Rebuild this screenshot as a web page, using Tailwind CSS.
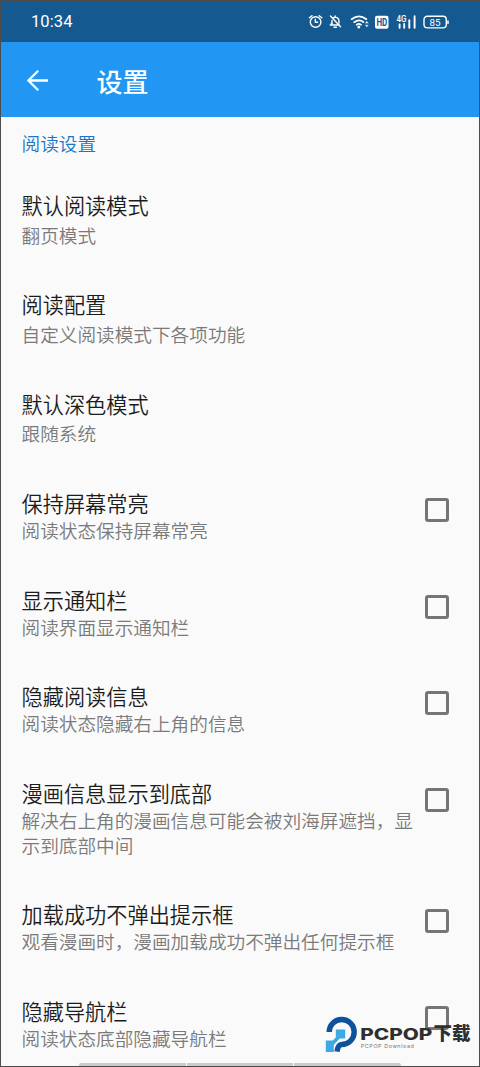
<!DOCTYPE html>
<html lang="zh-CN">
<head>
<meta charset="utf-8">
<title>设置</title>
<script src="https://cdn.jsdelivr.net/npm/@tailwindcss/browser@4"></script>
</head>
<body class="w-[480px] h-[1067px] overflow-hidden bg-[#fafafa] font-['Noto_Sans_CJK_SC',sans-serif]">
<div class="relative w-[480px] h-[1067px] overflow-hidden flex flex-col">
  <header class="shrink-0">
    <div class="h-[42px] bg-[#155991] flex items-center justify-between pl-[31px] pr-[31px] text-white">
      <span class="mt-[2px] font-[Roboto,sans-serif] text-[16.5px] leading-none tracking-[0.1px]">10:34</span>
      <svg width="142" height="20" viewBox="0 0 142 20" fill="none" stroke="#fff" stroke-width="1.4" stroke-linecap="round" stroke-linejoin="round">
        <circle cx="8.6" cy="11" r="5.3"/><path d="M8.3 8.3v3h2.3M2.4 6.8 5 4.7M14.8 6.8 12.2 4.7"/>
        <path d="M23.2 14h9.2M25 13V9.5M26 7.3c2.5-2.3 6-.3 6 2.7V12M23.6 14l1.4-2M23.5 5 33.5 15.7M27 16.3h2.4M28.2 5.5V5"/>
        <path d="M44.6 8.2q7.4-5.5 14.8 0M47.2 11.2q4.8-3.5 9.2-.2M49.6 13.7q2.3-1.5 4.4 0" stroke-width="1.7"/><circle cx="51.8" cy="16" r=".8" fill="#fff"/><path d="m58.4 12 1.4-1.7 1.4 1.7zM58.4 14.3l1.4 1.7 1.4-1.7z" fill="#fff" stroke-width=".3"/>
        <rect x="68" y="4.7" width="13.5" height="13" rx="2" fill="#fff" stroke="none"/>
        <text x="69.4" y="15" font-family="Roboto" font-size="10.5" font-weight="700" fill="#155991" stroke="none" textLength="10.8" lengthAdjust="spacingAndGlyphs">HD</text>
        <text x="89.5" y="10.5" font-family="Roboto" font-size="8.8" font-weight="500" fill="#fff" stroke="none" textLength="10" lengthAdjust="spacingAndGlyphs">4G</text>
        <path d="M92.6 13.5v3.2M97.2 13v3.7M102.3 9.2v7.5M107.6 5.2v11.5" stroke-width="1.9"/>
        <rect x="117" y="5.3" width="22.3" height="11.6" rx="3.3"/><path d="M141 10v2.5" stroke-width="1.5"/>
        <text x="122.6" y="14.6" font-family="Roboto" font-size="9.8" fill="#fff" stroke="none" textLength="11">85</text>
      </svg>
    </div>
    <div class="h-[75px] bg-[#2196f3] flex items-center pl-[26px] text-white">
      <svg width="23" height="22" viewBox="0 0 23 22" fill="none" stroke="#fff" stroke-width="2.3"><path d="M22 11.5H2M12.2 1.8 2.4 11.5l9.8 9.7"/></svg>
      <h1 class="ml-[47.5px] mt-[2px] text-[26px] leading-none font-medium">设置</h1>
    </div>
  </header>

  <main class="px-[21.5px] text-[#1c1c1c]">
    <h2 class="h-[54px] pt-[13px] text-[18.65px] leading-[25px] font-[350] text-[#1976c8]">阅读设置</h2>

    <section class="h-[99.3px] pt-[20px] flex flex-col gap-[3.8px]">
      <p class="text-[21.2px] leading-[28px] font-[350]">默认阅读模式</p>
      <p class="text-[18.65px] leading-[24.7px] font-[350] text-[#7a7a7a]">翻页模式</p>
    </section>
    <section class="h-[99.3px] pt-[20px] flex flex-col gap-[3.8px]">
      <p class="text-[21.2px] leading-[28px] font-[350]">阅读配置</p>
      <p class="text-[18.65px] leading-[24.7px] font-[350] text-[#7a7a7a]">自定义阅读模式下各项功能</p>
    </section>
    <section class="h-[99.3px] pt-[20px] flex flex-col gap-[3.8px]">
      <p class="text-[21.2px] leading-[28px] font-[350]">默认深色模式</p>
      <p class="text-[18.65px] leading-[24.7px] font-[350] text-[#7a7a7a]">跟随系统</p>
    </section>

    <section class="h-[96.7px] pt-[20px] flex">
      <div class="w-[392px] shrink-0"><p class="text-[21.2px] leading-[28px] font-[350]">保持屏幕常亮</p>
      <p class="mt-[1px] text-[18.65px] leading-[24.7px] font-[350] text-[#7a7a7a]">阅读状态保持屏幕常亮</p></div>
      <i class="ml-[11.5px] mt-[9px] size-[24px] shrink-0 rounded-[3px] border-[3px] border-[#757575]"></i>
    </section>
    <section class="h-[96.7px] pt-[20px] flex">
      <div class="w-[392px] shrink-0"><p class="text-[21.2px] leading-[28px] font-[350]">显示通知栏</p>
      <p class="mt-[1px] text-[18.65px] leading-[24.7px] font-[350] text-[#7a7a7a]">阅读界面显示通知栏</p></div>
      <i class="ml-[11.5px] mt-[9px] size-[24px] shrink-0 rounded-[3px] border-[3px] border-[#757575]"></i>
    </section>
    <section class="h-[96.7px] pt-[20px] flex">
      <div class="w-[392px] shrink-0"><p class="text-[21.2px] leading-[28px] font-[350]">隐藏阅读信息</p>
      <p class="mt-[1px] text-[18.65px] leading-[24.7px] font-[350] text-[#7a7a7a]">阅读状态隐藏右上角的信息</p></div>
      <i class="ml-[11.5px] mt-[9px] size-[24px] shrink-0 rounded-[3px] border-[3px] border-[#757575]"></i>
    </section>
    <section class="h-[121.4px] pt-[20px] flex">
      <div class="w-[392px] shrink-0"><p class="text-[21.2px] leading-[28px] font-[350]">漫画信息显示到底部</p>
      <p class="mt-[1px] text-[18.65px] leading-[24.7px] font-[350] text-[#7a7a7a]">解决右上角的漫画信息可能会被刘海屏遮挡，显<br>示到底部中间</p></div>
      <i class="ml-[11.5px] mt-[9px] size-[24px] shrink-0 rounded-[3px] border-[3px] border-[#757575]"></i>
    </section>
    <section class="h-[96.7px] pt-[20px] flex">
      <div class="w-[392px] shrink-0"><p class="text-[21.2px] leading-[28px] font-[350]">加载成功不弹出提示框</p>
      <p class="mt-[1px] text-[18.65px] leading-[24.7px] font-[350] text-[#7a7a7a]">观看漫画时，漫画加载成功不弹出任何提示框</p></div>
      <i class="ml-[11.5px] mt-[9px] size-[24px] shrink-0 rounded-[3px] border-[3px] border-[#757575]"></i>
    </section>
    <section class="h-[89px] pt-[20px] flex">
      <div class="w-[392px] shrink-0"><p class="text-[21.2px] leading-[28px] font-[350]">隐藏导航栏</p>
      <p class="mt-[1px] text-[18.65px] leading-[24.7px] font-[350] text-[#7a7a7a]">阅读状态底部隐藏导航栏</p></div>
      <i class="ml-[11.5px] mt-[9px] size-[24px] shrink-0 rounded-[3px] border-[3px] border-[#757575]"></i>
    </section>
  </main>

  <div class="absolute left-[79px] bottom-0 h-[4px] w-[322px] flex gap-px rounded-t-[2px] overflow-hidden">
    <i class="flex-1 bg-[#cbcbcb]"></i><i class="flex-1 bg-[#cbcbcb]"></i><i class="flex-1 bg-[#cbcbcb]"></i>
  </div>

  <svg class="absolute left-[322px] top-[1010px]" width="152" height="46" viewBox="0 0 152 46">
    <path d="M7.2 22A12.5 12.5 0 1 1 19.7 34.5Q16 34.6 15 41.6" fill="none" stroke="#0c529c" stroke-width="5.4"/>
    <path d="M13.8 19.5h9.4v9h-5.4l-6 6.2v7.2H3.8V30.4h6.8l3.2-3z" fill="#3fa9e5"/>
    <text x="38.3" y="29.9" font-family="Inter" font-weight="800" font-size="15.4" fill="#2f2f2f" textLength="72" lengthAdjust="spacingAndGlyphs">PCPOP</text>
    <text x="111.5" y="30.2" font-family="Noto Sans CJK SC" font-weight="900" font-size="18" fill="#2f2f2f" textLength="37" lengthAdjust="spacingAndGlyphs">下载</text>
    <text x="38.8" y="37.8" font-family="Inter" font-size="5.4" fill="#777" textLength="53" lengthAdjust="spacing">PCPOP Download</text>
  </svg>
  <div class="absolute inset-0 border border-[#4c4c4c] pointer-events-none"></div>
</div>
</body>
</html>
